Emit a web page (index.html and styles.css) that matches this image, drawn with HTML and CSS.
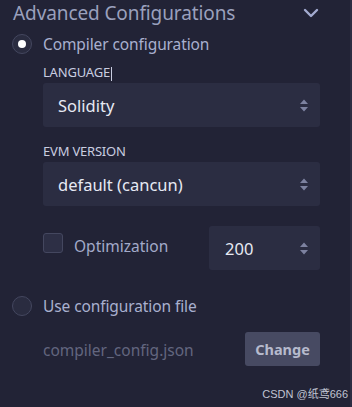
FILE: index.html
```html
<!DOCTYPE html>
<html lang="en">
<head>
  <meta charset="UTF-8" />
  <title>Advanced Configurations</title>
  <link rel="stylesheet" href="styles.css">
</head>
<body>
  <div class="panel">
    <div class="header">
      <span class="title">Advanced Configurations</span>
      <svg class="chevron" width="16" height="10" viewBox="0 0 16 10">
        <path d="M2 2 L8 8 L14 2" fill="none" stroke="#a3abd0" stroke-width="2.4" stroke-linecap="round" stroke-linejoin="round"/>
      </svg>
    </div>

    <div class="radio-row">
      <span class="radio checked"></span>
      <span class="radio-label">Compiler configuration</span>
    </div>

    <div class="field-label">LANGUAGE<span class="caret"></span></div>
    <div class="select">
      <span>Solidity</span>
      <svg class="arrows" width="8" height="13" viewBox="0 0 8 13"><path d="M0 5 L4 0.5 L8 5 Z M0 8 L4 12.5 L8 8 Z" fill="#7d82a0"/></svg>
    </div>

    <div class="field-label evm">EVM VERSION</div>
    <div class="select">
      <span>default (cancun)</span>
      <svg class="arrows" width="8" height="13" viewBox="0 0 8 13"><path d="M0 5 L4 0.5 L8 5 Z M0 8 L4 12.5 L8 8 Z" fill="#7d82a0"/></svg>
    </div>

    <div class="opt-row">
      <span class="checkbox"></span>
      <span class="opt-label">Optimization</span>
      <div class="select number">
        <span>200</span>
        <svg class="arrows" width="8" height="13" viewBox="0 0 8 13"><path d="M0 5 L4 0.5 L8 5 Z M0 8 L4 12.5 L8 8 Z" fill="#7d82a0"/></svg>
      </div>
    </div>

    <div class="radio-row second">
      <span class="radio"></span>
      <span class="radio-label">Use configuration file</span>
    </div>

    <div class="file-row">
      <span class="file-name">compiler_config.json</span>
      <button type="button" class="change">Change</button>
    </div>

    <div class="watermark">CSDN @纸鸢666</div>
  </div>
</body>
</html>
```

FILE: styles.css
```css
body {
  margin: 0;
  background-color: #222336;
  font-family: "Noto Sans", sans-serif;
  width: 352px;
  height: 407px;
  overflow: hidden;
}
.panel {
  padding: 0 30px 0 12px;
  border-right: 2px solid #2c2d42;
  height: 407px;
  box-sizing: border-box;
}
.header {
  display: flex;
  justify-content: space-between;
  align-items: center;
  height: 26px;
  padding-left: 1px;
}
.title {
  font-size: 19px;
  color: #9aa0bd;
  letter-spacing: -0.1px;
}
.chevron {
  margin-right: 1px;
}
.radio-row {
  display: flex;
  align-items: center;
  height: 22px;
  margin-top: 7px;
}
.radio-row.second {
  margin-top: 25px;
}
.radio {
  width: 18px;
  height: 18px;
  border-radius: 50%;
  border: 1px solid #44475f;
  background-color: #2a2c40;
  display: flex;
  align-items: center;
  justify-content: center;
}
.radio.checked::after {
  content: "";
  width: 8px;
  height: 8px;
  border-radius: 50%;
  background-color: #ffffff;
}
.radio-label {
  margin-left: 11px;
  font-size: 15.5px;
  color: #a9b0cf;
  letter-spacing: -0.1px;
}
.field-label {
  margin: 9px 0 0 31px;
  height: 16px;
  line-height: 16px;
  font-size: 13px;
  color: #c9cde0;
  letter-spacing: -0.2px;
}
.field-label.evm {
  margin-top: 16px;
}
.caret {
  display: inline-block;
  width: 1px;
  height: 14px;
  background-color: #c9cde0;
  vertical-align: middle;
  margin-left: 1px;
}
.select {
  display: flex;
  align-items: center;
  justify-content: space-between;
  height: 44px;
  margin: 3px 0 0 31px;
  padding: 0 12px 0 15px;
  background-color: #2b2d42;
  border-radius: 3px;
  font-size: 16.5px;
  color: #e6e9f3;
}
.opt-row {
  display: flex;
  align-items: flex-start;
  margin: 20px 0 0 31px;
  height: 44px;
}
.checkbox {
  width: 18px;
  height: 18px;
  margin-top: 7px;
  border: 1px solid #44475f;
  border-radius: 3px;
  background-color: #2d2f45;
}
.opt-label {
  margin: 9px 0 0 11px;
  font-size: 15.5px;
  color: #a3aac9;
  flex: 1;
}
.select.number {
  width: 111px;
  box-sizing: border-box;
  margin: 0;
  padding-left: 16px;
}
.file-row {
  display: flex;
  align-items: center;
  justify-content: space-between;
  margin: 15px 0 0 31px;
  height: 34px;
}
.file-name {
  font-size: 15.5px;
  color: #62667f;
  margin-top: 2px;
}
.change {
  height: 34px;
  width: 75px;
  border: none;
  border-radius: 3px;
  background-color: #474a62;
  color: #b6bacd;
  font-family: "Noto Sans", sans-serif;
  font-weight: bold;
  font-size: 14.5px;
}
.watermark {
  margin-top: 19px;
  margin-right: -28px;
  text-align: right;
  font-size: 11px;
  color: #c0c3d2;
  font-family: "Liberation Sans", "Noto Sans CJK SC", sans-serif;
}
```
